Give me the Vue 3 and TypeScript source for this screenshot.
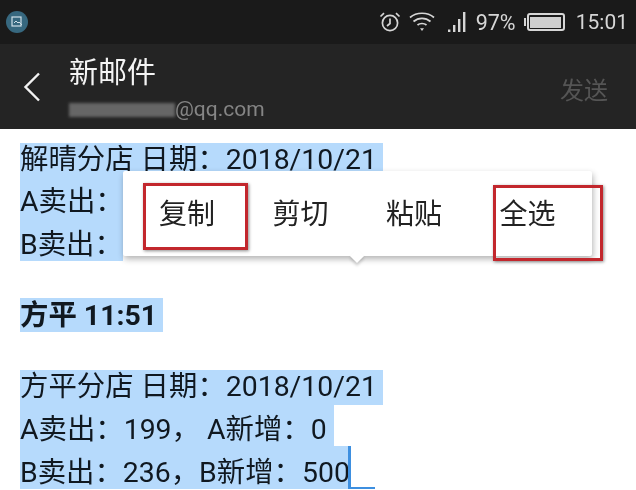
<script setup lang="ts">
const menuItems: string[] = ['复制', '剪切', '粘贴', '全选']
</script>

<template>
  <div class="screen">
    <header class="status">
      <div class="app-dot">
        <svg width="12" height="12" viewBox="0 0 12 12" fill="none" stroke="#cfe0e8" stroke-width="1.2">
          <rect x="1" y="1" width="9" height="9" />
          <path d="M3 7l2-2 2 2 1-1 3 3" stroke-width="1" />
        </svg>
      </div>
      <div class="status-right">
        <svg class="alarm" width="22" height="22" viewBox="0 0 22 22" fill="none" stroke="#d6d6d6" stroke-width="1.7">
          <circle cx="11" cy="12" r="7.6" />
          <path d="M11 7.5V12.5L8 15" />
          <path d="M1.5 5.5L5 2.2M20.5 5.5L17 2.2" />
        </svg>
        <svg class="wifi" width="26" height="22" viewBox="0 0 26 22" fill="none" stroke="#d6d6d6" stroke-width="1.7">
          <path d="M1 6.5C7.5 .8 18.5 .8 25 6.5" />
          <path d="M4.5 10.5C9.5 6.2 16.5 6.2 21.5 10.5" />
          <path d="M8.5 14C11 12 15 12 17.5 14" />
          <path d="M11 17.2h4L13 20z" fill="#d6d6d6" stroke="none" />
        </svg>
        <svg class="signal" width="20" height="22" viewBox="0 0 20 22" fill="#d6d6d6">
          <rect x="0" y="18.5" width="2.4" height="2.5" />
          <rect x="5" y="14" width="2.4" height="7" />
          <rect x="10" y="8" width="2.4" height="13" />
          <rect x="15" y="1" width="2.4" height="20" />
        </svg>
        <span class="pct">97%</span>
        <div class="battery"><div class="battery-fill"></div></div>
        <span class="time">15:01</span>
      </div>
    </header>

    <div class="toolbar">
      <svg class="back" width="18" height="30" viewBox="0 0 18 30" fill="none" stroke="#f2f2f2" stroke-width="2.4">
        <path d="M16 1.5L2.5 15 16 28.5" />
      </svg>
      <div class="heading">
        <div class="title">新邮件</div>
        <div class="sub"><span class="smudge"></span><span>@qq.com</span></div>
      </div>
      <span class="send">发送</span>
    </div>

    <main class="body">
      <div class="block first">
        <div class="row r1"><span>解晴分店 日期：2018/10/21</span></div>
        <div class="row r2 short"><span>A卖出：</span></div>
        <div class="row r3 short"><span>B卖出：</span></div>
      </div>
      <div class="row bold"><span>方平 11:51</span></div>
      <div class="block last">
        <div class="row r1"><span>方平分店 日期：2018/10/21</span></div>
        <div class="row r2 mid"><span>A卖出：199， A新增：0</span></div>
        <div class="row r3 end"><span>B卖出：236，B新增：500</span><i class="caret"></i><i class="handle"></i></div>
      </div>

      <div class="menu">
        <span v-for="item in menuItems" :key="item" class="menu-item">{{ item }}</span>
        <i class="arrow"></i>
      </div>
      <div class="mark mark-copy"></div>
      <div class="mark mark-all"></div>
    </main>
  </div>
</template>

<style>
html, body { margin: 0; background: #fff; }
</style>

<style scoped>
.screen {
  position: relative;
  width: 636px;
  height: 490px;
  overflow: hidden;
  background: #fff;
  font-family: "Roboto", "Noto Sans CJK SC", sans-serif;
  color: #111;
  filter: blur(.35px);
}
.status {
  height: 44px;
  background: #1a1a1a;
  display: flex;
  align-items: center;
  justify-content: space-between;
  padding: 0 8px 0 6px;
  box-sizing: border-box;
  color: #d6d6d6;
}
.app-dot {
  width: 22px;
  height: 22px;
  border-radius: 50%;
  background: #37687f;
  display: flex;
  align-items: center;
  justify-content: center;
}
.status-right { display: flex; align-items: center; }
.alarm { margin-right: 8px; }
.wifi { margin-right: 13px; }
.signal { margin-right: 8px; }
.pct { font-size: 21.5px; margin-right: 13px; width: 38px; white-space: nowrap; }
.battery {
  width: 38px;
  height: 18px;
  border: 2px solid #d6d6d6;
  border-radius: 3px;
  padding: 1.5px;
  box-sizing: border-box;
  margin-right: 11px;
  position: relative;
}
.battery::before {
  content: "";
  position: absolute;
  left: -5px;
  top: 3px;
  width: 2px;
  height: 8px;
  background: #d6d6d6;
}
.battery-fill { width: 100%; height: 100%; background: #cfcfcf; }
.time { font-size: 21px; }
.toolbar {
  height: 85px;
  background: #242424;
  display: flex;
  align-items: center;
  box-sizing: border-box;
  padding: 0 28px 0 23px;
}
.back { margin-right: 28px; flex: none; }
.heading { flex: 1; margin-top: 4px; }
.title { font-size: 29px; line-height: 36px; color: #f4f4f4; }
.sub { display: flex; align-items: center; font-size: 21px; line-height: 28px; color: #858585; margin-top: 4px; }
.smudge {
  width: 106px;
  height: 14px;
  background: #666;
  filter: blur(1.5px);
  margin-top: 2px;
}
.send { font-size: 24px; color: #555; margin-top: 3px; }

.body { position: relative; padding-top: 14px; }
.row { font-size: 28.4px; white-space: nowrap; margin-left: 20px; display: flex; background: #b6dafc; box-sizing: border-box; color: #101820; }
.row span { display: block; }
.r1 { height: 35px; line-height: 33px; width: 363px; }
.r2 { height: 41px; line-height: 50px; }
.r3 { height: 43px; line-height: 54px; }
.short { width: 103px; }
.first .r1 { height: 36px; }
.first .r2 { height: 40px; line-height: 46px; }
.first .r3 { height: 42px; line-height: 52px; }
.bold { margin-top: 37px; height: 34px; line-height: 35px; font-weight: 700; width: 143px; }
.block.last { margin-top: 38px; }
.mid { width: 314px; }
.end { position: relative; width: 330px; }
.caret { position: absolute; left: 328px; top: 0; width: 2.5px; height: 43px; background: #3d8fe0; }
.handle { position: absolute; left: 328px; top: 41px; width: 27px; height: 2px; background: #3d8fe0; }

.menu {
  position: absolute;
  left: 123px;
  top: 42px;
  width: 469px;
  height: 85px;
  background: #fff;
  box-shadow: 1px 3px 6px rgba(0, 0, 0, .3);
  border-radius: 2px;
  display: flex;
  align-items: center;
  padding: 3px 0 0 36px;
  box-sizing: border-box;
}
.menu-item { width: 113.5px; flex: none; font-size: 28px; line-height: 40px; color: #222; }
.arrow {
  position: absolute;
  left: 229px;
  top: 80px;
  width: 10px;
  height: 10px;
  background: #fff;
  transform: rotate(45deg);
  box-shadow: 2px 2px 3px rgba(0, 0, 0, .18);
}
.mark {
  position: absolute;
  border: 3px solid #c2272d;
  box-sizing: border-box;
  box-shadow: 1px 1px 3px rgba(0, 0, 0, .45);
}
.mark-copy { left: 143px; top: 54px; width: 105px; height: 67px; }
.mark-all { left: 493px; top: 56px; width: 110px; height: 76px; }
</style>
